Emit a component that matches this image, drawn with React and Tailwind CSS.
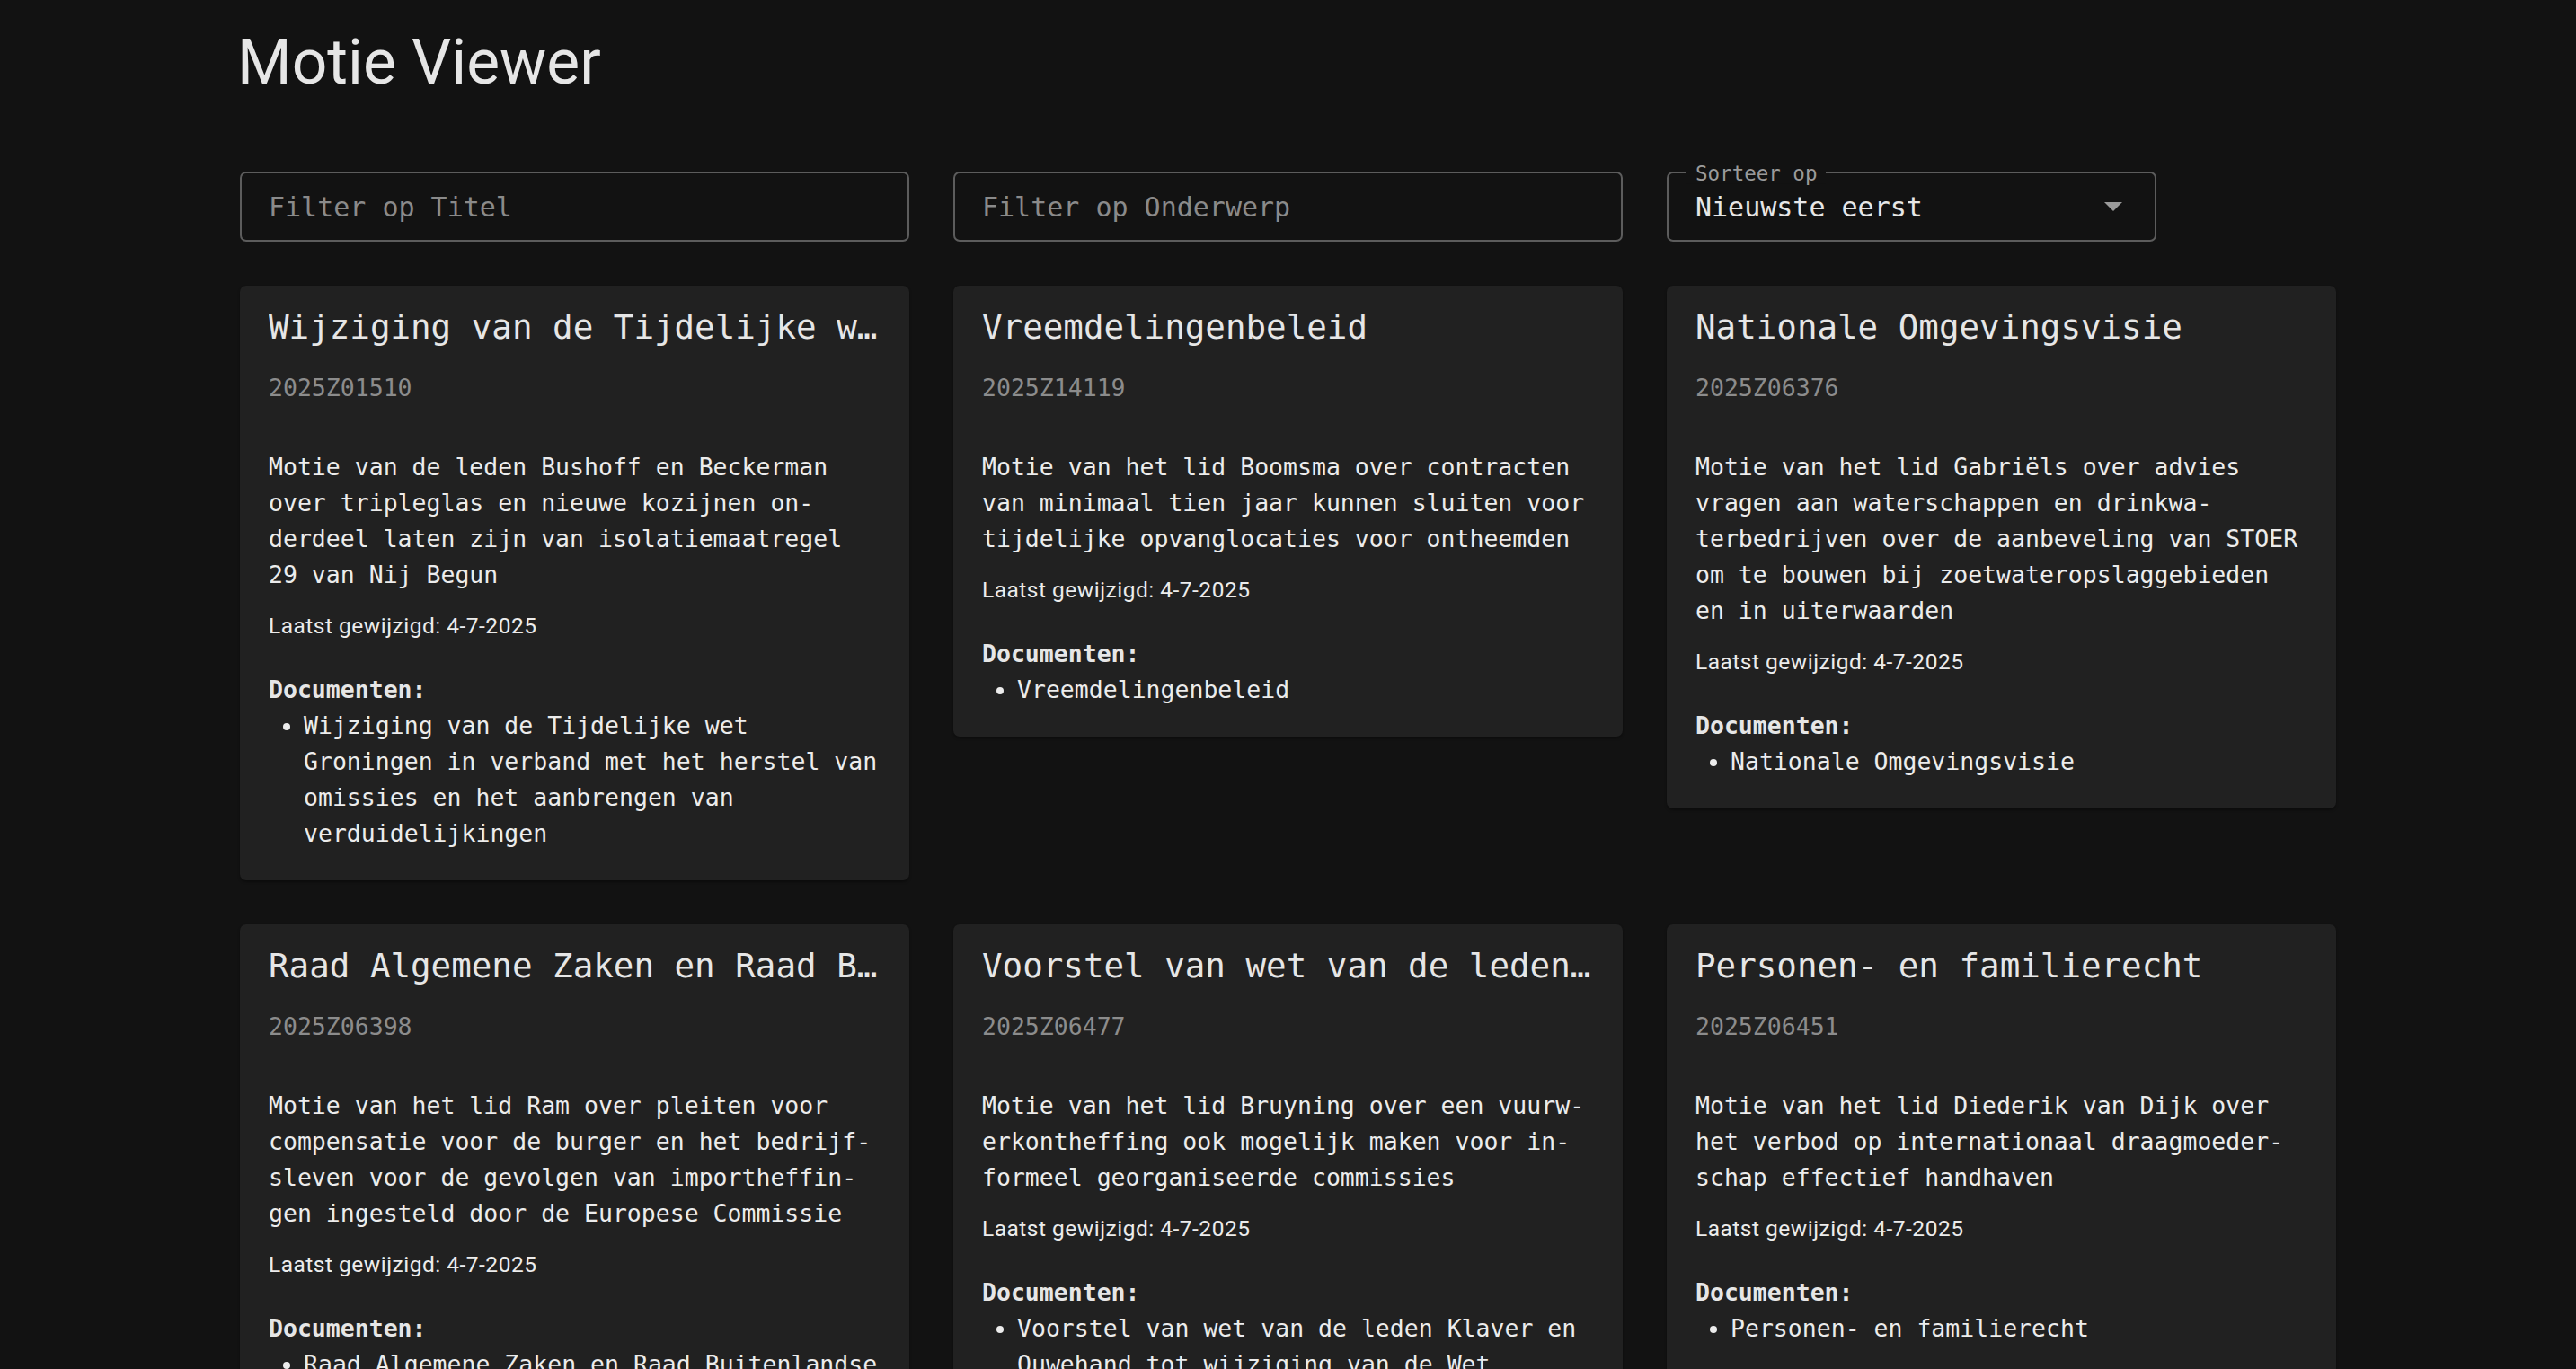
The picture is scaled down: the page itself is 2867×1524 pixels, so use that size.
import React from 'react';

const motions = [
    {
        title: 'Wijziging van de Tijdelijke wet Groningen in verband met het herstel van omissies en het aanbrengen van verduidelijkingen',
        id: '2025Z01510',
        body: 'Motie van de leden Bushoff en Beckerman over tripleglas en nieuwe kozijnen on\u00ADderdeel laten zijn van isolatiemaatregel 29 van Nij Begun',
        date: '4-7-2025',
        docs: ['Wijziging van de Tijdelijke wet Groningen in verband met het herstel van omissies en het aanbrengen van verduidelijkingen'],
    },
    {
        title: 'Vreemdelingenbeleid',
        id: '2025Z14119',
        body: 'Motie van het lid Boomsma over contracten van minimaal tien jaar kunnen sluiten voor tijdelijke opvanglocaties voor ontheemden',
        date: '4-7-2025',
        docs: ['Vreemdelingenbeleid'],
    },
    {
        title: 'Nationale Omgevingsvisie',
        id: '2025Z06376',
        body: 'Motie van het lid Gabriëls over advies vragen aan waterschappen en drinkwa\u00ADterbedrijven over de aanbeveling van STOER om te bouwen bij zoetwateropslaggebieden en in uiterwaarden',
        date: '4-7-2025',
        docs: ['Nationale Omgevingsvisie'],
    },
    {
        title: 'Raad Algemene Zaken en Raad Buitenlandse Zaken',
        id: '2025Z06398',
        body: 'Motie van het lid Ram over pleiten voor compensatie voor de burger en het bedrijf\u00ADsleven voor de gevolgen van importheffin\u00ADgen ingesteld door de Europese Commissie',
        date: '4-7-2025',
        docs: ['Raad Algemene Zaken en Raad Buitenlandse Zaken'],
    },
    {
        title: 'Voorstel van wet van de leden Klaver en Ouwehand tot wijziging van de Wet langdurige zorg',
        id: '2025Z06477',
        body: 'Motie van het lid Bruyning over een vuurw\u00ADerkontheffing ook mogelijk maken voor in\u00ADformeel georganiseerde commissies',
        date: '4-7-2025',
        docs: ['Voorstel van wet van de leden Klaver en Ouwehand tot wijziging van de Wet langdurige zorg'],
    },
    {
        title: 'Personen- en familierecht',
        id: '2025Z06451',
        body: 'Motie van het lid Diederik van Dijk over het verbod op internationaal draagmoeder\u00ADschap effectief handhaven',
        date: '4-7-2025',
        docs: ['Personen- en familierecht'],
    },
];

const MotieCard = ({ motie }) => {
    return (
        <div className="bg-[#212121] rounded-[7px] px-[32px] pt-[21px] pb-[32px] shadow-[0_2px_3px_rgba(0,0,0,0.35)] text-[#ececec] font-['DejaVu_Sans_Mono',monospace]">
            <h2 className="truncate text-[37.5px] leading-[50px] text-[#e6e6e6]">{motie.title}</h2>
            <p className="mt-[23px] text-[26.5px] leading-[40px] text-[#8c8c8c]">{motie.id}</p>
            <p className="mt-[48px] text-[26.5px] leading-[40px]">{motie.body}</p>
            <p className="mt-[19px] font-['Roboto',sans-serif] text-[24.5px] leading-[35px] tracking-[0.5px]">
                Laatst gewijzigd: {motie.date}
            </p>
            <p className="mt-[34px] text-[26.5px] leading-[40px] font-bold text-[#e6e6e6]">Documenten:</p>
            <ul className="list-disc pl-[39px] text-[26.5px] leading-[40px]">
                {motie.docs.map((doc) => (
                    <li key={doc}>{doc}</li>
                ))}
            </ul>
        </div>
    );
};

export default function App() {
    return (
        <div className="min-h-screen bg-[#121212] pt-[28px] pb-[60px]">
            <div className="mx-auto w-[2333px]">
                <h1 className="-ml-[3px] font-['Roboto',sans-serif] text-[69.5px] leading-[83px] font-normal text-[#e6e6e6]">
                    Motie Viewer
                </h1>

                <div className="mt-[80px] grid grid-cols-3 gap-[49px] font-['DejaVu_Sans_Mono',monospace]">
                    <input
                        type="text"
                        placeholder="Filter op Titel"
                        className="h-[78px] w-full rounded-[7px] border-2 border-[#5c5c5c] bg-transparent pl-[30px] pr-[30px] text-[30px] text-[#e6e6e6] placeholder:text-[#8a8a8a] outline-none"
                    />
                    <input
                        type="text"
                        placeholder="Filter op Onderwerp"
                        className="h-[78px] w-full rounded-[7px] border-2 border-[#5c5c5c] bg-transparent pl-[30px] pr-[30px] text-[30px] text-[#e6e6e6] placeholder:text-[#8a8a8a] outline-none"
                    />
                    <div className="relative flex h-[78px] w-[545px] items-center rounded-[7px] border-2 border-[#5c5c5c] pl-[30px] pr-[36px]">
                        <span className="absolute left-[20px] top-0 -translate-y-1/2 bg-[#121212] px-[10px] text-[22.5px] leading-none text-[#9a9a9a]">
                            Sorteer op
                        </span>
                        <span className="flex-1 text-[30px] text-[#e6e6e6]">Nieuwste eerst</span>
                        <svg width="20" height="10" viewBox="0 0 20 10" className="text-[#9a9a9a]">
                            <path d="M0 0 L20 0 L10 10 Z" fill="currentColor" />
                        </svg>
                    </div>
                </div>

                <div className="mt-[49px] grid grid-cols-3 items-start gap-[49px]">
                    {motions.map((m) => (
                        <MotieCard key={m.id} motie={m} />
                    ))}
                </div>
            </div>
        </div>
    );
}
